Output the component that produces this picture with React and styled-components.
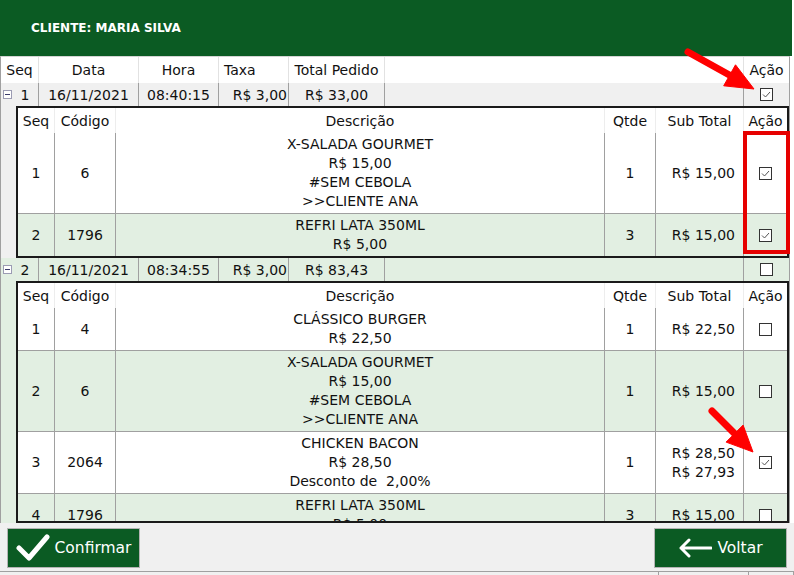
import React from 'react';
import styled, { createGlobalStyle } from 'styled-components';

const GREEN = '#0b5b23';
const ROW_GREEN = '#e2efe2';
const ROW_GRAY = '#f0f0f0';
const LINE = '#a0a0a0';
const MASTER_COLS = '38px 100px 80px 70px 96px 1fr 45px';
const DETAIL_COLS = '37px 61px 489px 51px 88px 43px';

const GlobalStyle = createGlobalStyle`
  html, body {
    margin: 0;
    padding: 0;
    background: #fff;
  }
  body {
    font-family: "DejaVu Sans", Tahoma, sans-serif;
    font-size: 14px;
    color: #111;
  }
`;

const Page = styled.div`
  position: relative;
  width: 794px;
  height: 575px;
  overflow: hidden;
  display: flex;
  flex-direction: column;
`;

const Header = styled.header`
  width: 792px;
  height: 56px;
  flex-shrink: 0;
  box-sizing: border-box;
  padding-left: 31px;
  display: flex;
  align-items: center;
  background: ${GREEN};
  color: #fff;
  font-weight: bold;
  font-size: 12px;
`;

const Grid = styled.div`
  width: 790px;
  height: 467px;
  flex-shrink: 0;
  box-sizing: border-box;
  border-top: 1px solid #d4d4d4;
  border-left: 1px solid ${LINE};
  border-right: 1px solid ${LINE};
  display: flex;
  flex-direction: column;
  overflow: hidden;
  background: #fff;
`;

const MasterHead = styled.div`
  display: grid;
  grid-template-columns: ${MASTER_COLS};
  height: 26px;
  flex-shrink: 0;
`;

const HeadCell = styled.div`
  display: flex;
  align-items: center;
  justify-content: ${p => p.$align || 'center'};
  padding-left: ${p => (p.$align === 'flex-start' ? '5px' : '0')};
  border-right: 1px solid #e2e2e2;
  &:last-child {
    border-right: none;
  }
`;

const MasterRow = styled.div`
  display: grid;
  grid-template-columns: ${MASTER_COLS};
  height: 23px;
  flex-shrink: 0;
  background: ${p => p.$bg};
`;

const Cell = styled.div`
  display: flex;
  align-items: center;
  justify-content: ${p => p.$align || 'center'};
  padding-right: ${p => (p.$align === 'flex-end' ? '1px' : '0')};
  border-right: 1px solid ${LINE};
  white-space: nowrap;
  &:last-child {
    border-right: none;
  }
`;

const ExpandBox = styled.span`
  width: 9px;
  height: 9px;
  margin-left: 2px;
  box-sizing: border-box;
  border: 1px solid #9b9bb3;
  background: #fff;
  display: flex;
  align-items: center;
  justify-content: center;
  &::after {
    content: '';
    width: 5px;
    height: 1px;
    background: #3a3a6a;
  }
`;

const SeqNum = styled.span`
  flex: 1;
  text-align: center;
`;

const DetailArea = styled.div`
  background: ${p => p.$bg};
  padding-left: 15px;
  flex: ${p => (p.$fill ? '1' : '0 0 auto')};
  min-height: 0;
  display: flex;
  flex-direction: column;
`;

const DetailTable = styled.div`
  border: 2px solid #1a1a1a;
  background: #fff;
  overflow: hidden;
  flex: ${p => (p.$fill ? '1' : '0 0 auto')};
  min-height: 0;
`;

const DetailHead = styled.div`
  display: grid;
  grid-template-columns: ${DETAIL_COLS};
  height: 25px;
`;

const DetailHeadCell = styled.div`
  display: flex;
  align-items: center;
  justify-content: center;
  border-right: 1px solid #ededed;
  &:last-child {
    border-right: none;
  }
`;

const DetailRow = styled.div`
  display: grid;
  grid-template-columns: ${DETAIL_COLS};
  background: ${p => p.$bg};
  &:not(:last-child) {
    border-bottom: 1px solid ${LINE};
  }
`;

const DCell = styled.div`
  display: flex;
  flex-direction: column;
  align-items: ${p => p.$align || 'center'};
  justify-content: ${p => (p.$top ? 'flex-start' : 'center')};
  padding: 2px ${p => (p.$align === 'flex-end' ? '8px' : '0')} 2px 0;
  line-height: 19px;
  border-right: 1px solid ${LINE};
  white-space: pre;
  &:last-child {
    border-right: none;
  }
`;

const Box = styled.span`
  width: 13px;
  height: 13px;
  box-sizing: border-box;
  border: 1px solid #333;
  background: #fff;
  display: inline-flex;
  align-items: center;
  justify-content: center;
`;

const Footer = styled.div`
  width: 794px;
  flex: 1;
  background: #f0f0f0;
  display: flex;
  flex-direction: column;
`;

const ButtonRow = styled.div`
  display: flex;
  justify-content: space-between;
  padding: 5px 7px 0 7px;
`;

const GreenButton = styled.button`
  width: 133px;
  height: 40px;
  box-sizing: border-box;
  border: 1px solid #b4b4b4;
  background: ${GREEN};
  color: #fff;
  font-family: "DejaVu Sans", Tahoma, sans-serif;
  font-size: 15.5px;
  display: flex;
  align-items: center;
  justify-content: center;
  gap: 5px;
  padding: 0;
  cursor: pointer;
`;

const FooterEdge = styled.div`
  margin-top: auto;
  height: 3px;
  border-top: 1px solid ${LINE};
  display: grid;
  grid-template-columns: 659px 90px 1fr;
  & > span {
    border-right: 1px solid ${LINE};
  }
`;

const Overlay = styled.svg`
  position: absolute;
  left: 0;
  top: 0;
  pointer-events: none;
`;

const Check = ({ checked }) => (
  <Box>
    {checked && (
      <svg width="11" height="11" viewBox="0 0 11 11">
        <polyline points="2,5.5 4.5,8 9,3" fill="none" stroke="#555" strokeWidth="1" />
      </svg>
    )}
  </Box>
);

const XSALADA = ['X-SALADA GOURMET', 'R$ 15,00', '#SEM CEBOLA', '>>CLIENTE ANA'];

const orders = [
  {
    seq: 1, data: '16/11/2021', hora: '08:40:15', taxa: 'R$ 3,00', total: 'R$ 33,00',
    checked: true, bg: ROW_GRAY,
    items: [
      { seq: 1, cod: '6', desc: XSALADA, qtde: 1, sub: ['R$ 15,00'], checked: true },
      { seq: 2, cod: '1796', desc: ['REFRI LATA 350ML', 'R$ 5,00'], qtde: 3, sub: ['R$ 15,00'], checked: true },
    ],
  },
  {
    seq: 2, data: '16/11/2021', hora: '08:34:55', taxa: 'R$ 3,00', total: 'R$ 83,43',
    checked: false, bg: ROW_GREEN, fill: true,
    items: [
      { seq: 1, cod: '4', desc: ['CLÁSSICO BURGER', 'R$ 22,50'], qtde: 1, sub: ['R$ 22,50'], checked: false },
      { seq: 2, cod: '6', desc: XSALADA, qtde: 1, sub: ['R$ 15,00'], checked: false },
      { seq: 3, cod: '2064', desc: ['CHICKEN BACON', 'R$ 28,50', 'Desconto de  2,00%'], qtde: 1, sub: ['R$ 28,50', 'R$ 27,93'], checked: true },
      { seq: 4, cod: '1796', desc: ['REFRI LATA 350ML', 'R$ 5,00'], qtde: 3, sub: ['R$ 15,00'], checked: false },
    ],
  },
];

const Lines = ({ lines }) => lines.map((l, i) => <span key={i}>{l}</span>);

const Order = ({ order }) => (
  <>
    <MasterRow $bg={order.bg}>
      <Cell $align="flex-start">
        <ExpandBox />
        <SeqNum>{order.seq}</SeqNum>
      </Cell>
      <Cell>{order.data}</Cell>
      <Cell>{order.hora}</Cell>
      <Cell $align="flex-end">{order.taxa}</Cell>
      <Cell>{order.total}</Cell>
      <Cell />
      <Cell><Check checked={order.checked} /></Cell>
    </MasterRow>
    <DetailArea $bg={order.bg} $fill={order.fill}>
      <DetailTable $fill={order.fill}>
        <DetailHead>
          <DetailHeadCell>Seq</DetailHeadCell>
          <DetailHeadCell>Código</DetailHeadCell>
          <DetailHeadCell>Descrição</DetailHeadCell>
          <DetailHeadCell>Qtde</DetailHeadCell>
          <DetailHeadCell>Sub Total</DetailHeadCell>
          <DetailHeadCell>Ação</DetailHeadCell>
        </DetailHead>
        {order.items.map((it, i) => (
          <DetailRow key={it.seq} $bg={i % 2 ? ROW_GREEN : '#fff'}>
            <DCell>{it.seq}</DCell>
            <DCell>{it.cod}</DCell>
            <DCell $top><Lines lines={it.desc} /></DCell>
            <DCell>{it.qtde}</DCell>
            <DCell $align="flex-end"><Lines lines={it.sub} /></DCell>
            <DCell><Check checked={it.checked} /></DCell>
          </DetailRow>
        ))}
      </DetailTable>
    </DetailArea>
  </>
);

const Annotations = () => (
  <Overlay width="794" height="575" viewBox="0 0 794 575">
    <g fill="#f00" stroke="#f00">
      <line x1="688" y1="52" x2="733" y2="77" strokeWidth="7" strokeLinecap="round" />
      <polygon points="754,89 723.7,85.8 735.5,64.8" strokeWidth="1" />
      <line x1="712" y1="411" x2="737" y2="436" strokeWidth="7" strokeLinecap="round" />
      <polygon points="753,452 726.1,442.1 743.1,425.1" strokeWidth="1" />
    </g>
    <rect x="745" y="133" width="43" height="119" fill="none" stroke="#e60000" strokeWidth="4" />
  </Overlay>
);

export default function App() {
  return (
    <Page>
      <GlobalStyle />
      <Header>CLIENTE: MARIA SILVA</Header>
      <Grid>
        <MasterHead>
          <HeadCell>Seq</HeadCell>
          <HeadCell>Data</HeadCell>
          <HeadCell>Hora</HeadCell>
          <HeadCell $align="flex-start">Taxa</HeadCell>
          <HeadCell>Total Pedido</HeadCell>
          <HeadCell />
          <HeadCell>Ação</HeadCell>
        </MasterHead>
        {orders.map(o => <Order key={o.seq} order={o} />)}
      </Grid>
      <Footer>
        <ButtonRow>
          <GreenButton>
            <svg width="34" height="30" viewBox="0 0 34 30">
              <path d="M3 15 L13 25 L31 4" fill="none" stroke="#fff" strokeWidth="5" strokeLinecap="round" strokeLinejoin="round" />
            </svg>
            Confirmar
          </GreenButton>
          <GreenButton>
            <svg width="34" height="22" viewBox="0 0 34 22">
              <path d="M33 11 H3 M11 3 L3 11 L11 19" fill="none" stroke="#fff" strokeWidth="3" strokeLinecap="round" strokeLinejoin="round" />
            </svg>
            Voltar
          </GreenButton>
        </ButtonRow>
        <FooterEdge>
          <span />
          <span />
          <span />
        </FooterEdge>
      </Footer>
      <Annotations />
    </Page>
  );
}
